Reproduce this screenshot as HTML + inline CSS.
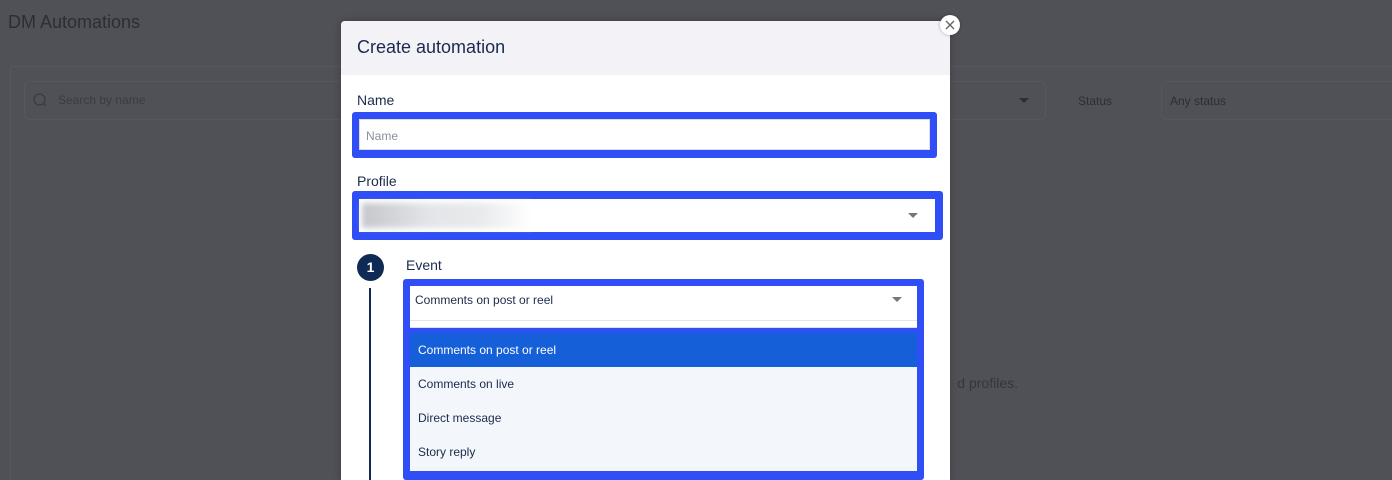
<!DOCTYPE html>
<html style="width:1392px;height:480px;overflow:hidden"><head><style>
*{box-sizing:border-box;margin:0;padding:0}
body{width:1392px;height:480px;overflow:hidden;background:#505157;font-family:"Liberation Sans",sans-serif;position:relative;color:#1c2b4a}
.a{position:absolute}
.bgt{color:#2b2e36}
</style></head><body>
<div class="a bgt" style="left:8px;top:12px;font-size:18px">DM Automations</div>
<div class="a" style="left:10px;top:66px;width:1400px;height:420px;border:1px solid #57585e;border-radius:4px"></div>
<div class="a" style="left:24px;top:81px;width:330px;height:39px;border:1px solid #57585e;border-radius:6px"></div>
<svg class="a" style="left:33px;top:93px" width="14" height="14"><circle cx="6.5" cy="6.5" r="5.5" fill="none" stroke="#3a3c43" stroke-width="1.3"/><path d="M10.5 10.5L13 13" stroke="#3a3c43" stroke-width="1.3"/></svg>
<div class="a bgt" style="left:58px;top:93px;font-size:12px;color:#3a3c43">Search by name</div>
<div class="a" style="left:900px;top:81px;width:146px;height:39px;border:1px solid #57585e;border-radius:6px"></div>
<div class="a" style="left:1019px;top:98px;border:5px solid transparent;border-top:5px solid #2b2e36"></div>
<div class="a bgt" style="left:1078px;top:94px;font-size:12px">Status</div>
<div class="a" style="left:1161px;top:81px;width:260px;height:39px;border:1px solid #57585e;border-radius:6px"></div>
<div class="a bgt" style="left:1170px;top:94px;font-size:12px">Any status</div>
<div class="a bgt" style="left:900px;top:375px;width:118px;text-align:right;font-size:14px;color:#34363d">d profiles.</div>

<div class="a" style="left:341px;top:21px;width:609px;height:459px;background:#fff;border-radius:4px 4px 0 0;overflow:hidden;box-shadow:0 0 8px rgba(0,0,0,.25)">
<div style="height:54px;background:#f2f2f7"></div>
</div>
<div class="a" style="left:357px;top:37px;font-size:18px;color:#1b2a4e">Create automation</div>
<div class="a" style="left:940px;top:15px;width:20px;height:20px;border-radius:50%;background:#fff;box-shadow:0 0 3px rgba(0,0,0,.3)"></div>
<svg class="a" style="left:940px;top:15px" width="20" height="20"><path d="M6 6L14 14M14 6L6 14" stroke="#666" stroke-width="1.4"/></svg>

<div class="a" style="left:357px;top:92px;font-size:14px">Name</div>
<div class="a" style="left:352px;top:112px;width:585px;height:46px;background:#2f4ef5;border-radius:3px"></div>
<div class="a" style="left:359px;top:119px;width:571px;height:31px;background:#fff;border:1px solid #dcdfe6"></div>
<div class="a" style="left:366px;top:129px;font-size:12px;color:#8a90a0">Name</div>

<div class="a" style="left:357px;top:173px;font-size:14px">Profile</div>
<div class="a" style="left:352px;top:191px;width:591px;height:49px;background:#2f4ef5;border-radius:3px"></div>
<div class="a" style="left:359px;top:199px;width:576px;height:33px;background:#fff"></div>
<div class="a" style="left:362px;top:203px;width:170px;height:25px;background:linear-gradient(90deg,#c5c7cc,#e3e5e8 40%,#e8eaec 70%,#fff);filter:blur(3px)"></div>
<div class="a" style="left:908px;top:213px;border:5px solid transparent;border-top:5px solid #777"></div>

<div class="a" style="left:357px;top:254px;width:27px;height:27px;border-radius:50%;background:#0e2a55;color:#fff;font-size:14px;font-weight:bold;text-align:center;line-height:27px">1</div>
<div class="a" style="left:369px;top:288px;width:2px;height:200px;background:#0e2a55"></div>
<div class="a" style="left:406px;top:257px;font-size:14px">Event</div>

<div class="a" style="left:403px;top:279px;width:521px;height:201px;background:#2f4ef5;border-radius:3px"></div>
<div class="a" style="left:410px;top:286px;width:507px;height:42px;background:#fff;border-bottom:1px solid #dcdfe6"></div>
<div class="a" style="left:410px;top:320px;width:507px;height:1px;background:#e3e5ea"></div>
<div class="a" style="left:415px;top:293px;font-size:12px;color:#1c2b4a">Comments on post or reel</div>
<div class="a" style="left:892px;top:297px;border:5px solid transparent;border-top:5px solid #777"></div>
<div class="a" style="left:410px;top:333px;width:507px;height:138px;background:#f3f6fb"></div>
<div class="a" style="left:410px;top:333px;width:507px;height:34px;background:#1560d8"></div>
<div class="a" style="left:418px;top:343px;font-size:12px;color:#fff">Comments on post or reel</div>
<div class="a" style="left:418px;top:377px;font-size:12px">Comments on live</div>
<div class="a" style="left:418px;top:411px;font-size:12px">Direct message</div>
<div class="a" style="left:418px;top:445px;font-size:12px">Story reply</div>
</body></html>
